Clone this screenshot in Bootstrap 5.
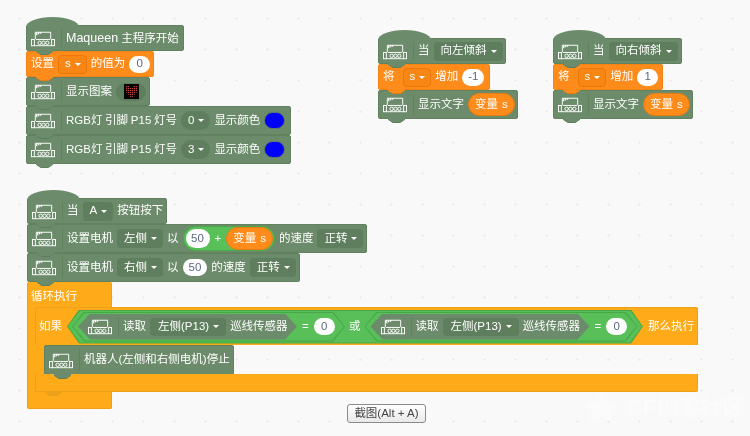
<!DOCTYPE html>
<html lang="en">
<head>
  <meta charset="UTF-8" />
  <title>Maqueen blocks</title>
  <link href="https://cdn.jsdelivr.net/npm/bootstrap@5.3.2/dist/css/bootstrap.min.css" rel="stylesheet"/>
  <style>
  body {
    margin: 0;
    background-color: #f9f9f9;
    font-family: "Liberation Sans", "Noto Sans CJK SC", sans-serif;
  }

  .workspace {
    width: 750px;
    height: 436px;
    overflow: hidden;
    background-color: #f9f9f9;
    background-image: radial-gradient(circle, #ececec 1px, transparent 1.2px);
    background-size: 31px 31px;
    background-position: 4px 3px;
    filter: blur(0.4px);
  }

  .stack-a { left: 26px; top: 25px; }
  .stack-b { left: 378px; top: 38px; }
  .stack-c { left: 553px; top: 38px; }
  .stack-d { left: 27px; top: 198px; }

  .blk {
    position: relative;
    display: flex;
    align-items: center;
    gap: 4px;
    height: 29px;
    color: #fff;
    font-size: 11.5px;
    white-space: nowrap;
    background: #6b8b6a;
    border: 1px solid #61815f;
    border-radius: 2px;
    padding-left: 4px;
  }
  .blk::before, .blk::after {
    content: "";
    position: absolute;
    left: 9px;
    width: 17px;
    clip-path: polygon(0 0, 100% 0, 100% 35%, 72% 100%, 28% 100%, 0 35%);
    z-index: 2;
  }
  .blk::before { bottom: -5px; height: 5px; background: #5f7e5e; }
  .blk::after { bottom: -4px; height: 4px; background: #6b8b6a; }

  .blk-set { background: #ff8c1a; border-color: #f28518; height: 26px; }
  .blk-set::before { background: #e67c12; }
  .blk-set::after { background: #ff8c1a; }

  .hat-dome {
    position: absolute;
    left: -1px;
    top: -9px;
    width: 53px;
    height: 10px;
    background: #6b8b6a;
    border-radius: 50% 50% 0 0 / 100% 100% 0 0;
  }
  .short { height: 26px; }

  .bot { width: 24px; height: 17px; flex: none; }
  .sep { width: 1px; align-self: stretch; margin: 3px 0 3px 2px; background: #61815f; }
  .word-big { font-size: 12.5px; }
  .tight-words { word-spacing: -0.5px; }

  .drop {
    display: flex;
    align-items: center;
    gap: 4px;
    height: 19px;
    padding: 0 6px 0 7px;
    background: #5f7e5e;
    border-radius: 4px;
  }
  .drop.round { border-radius: 10px; }
  .drop.orange { background: #f88614; border: 1px solid #e8780c; padding: 0 5px 0 6px; }
  .caret-mark {
    width: 0;
    height: 0;
    border-left: 3px solid transparent;
    border-right: 3px solid transparent;
    border-top: 3px solid #fff;
  }

  .num {
    display: flex;
    align-items: center;
    justify-content: center;
    height: 17px;
    min-width: 21px;
    padding: 0 6px;
    background: #fff;
    color: #5c6880;
    border-radius: 9px;
    font-size: 11.5px;
  }
  .swatch {
    width: 21px;
    height: 17px;
    background: #0000ff;
    border: 1px solid #5f7e5e;
    border-radius: 9px;
  }
  .matrix {
    display: flex;
    align-items: center;
    justify-content: center;
    width: 30px;
    height: 18px;
    background: #5f7e5e;
    border-radius: 9px;
  }
  .matrix svg { width: 15px; height: 15px; }

  .var-pill {
    display: flex;
    align-items: center;
    gap: 4px;
    height: 23px;
    padding: 0 6px;
    background: #ff8c1a;
    border: 1px solid #e67c12;
    border-radius: 12px;
  }
  .op-pill {
    display: flex;
    align-items: center;
    gap: 5px;
    height: 25px;
    padding: 0 1px 0 2px;
    background: #59c059;
    border: 1px solid #4aa84a;
    border-radius: 13px;
  }
  .op-pill .num { height: 19px; min-width: 24px; padding: 0 5px; border-radius: 10px; }

  .w-a1 { width: 158px; }
  .w-a2 { width: 128px; }
  .w-a3 { width: 124px; }
  .w-a4 { width: 265px; }
  .w-b1 { width: 128px; }
  .w-b2 { width: 112px; }
  .w-b3 { width: 140px; }
  .w-c1 { width: 129px; }
  .w-c2 { width: 110px; }
  .w-c3 { width: 140px; }
  .w-d1 { width: 140px; }
  .w-d2 { width: 340px; }
  .w-d3 { width: 273px; }

  /* forever loop: narrow orange column, the if block runs out past it */
  .loop-wrap {
    width: 85px;
    background: #ffab19;
    border: 1px solid #f09f14;
    border-top: 0;
    border-radius: 2px;
    color: #fff;
    font-size: 11.5px;
    white-space: nowrap;
    padding-bottom: 16px;
  }
  .loop-title { height: 25px; padding: 4px 0 0 3px; display: flex; align-items: center; }
  .if-wrap { margin-left: 7px; width: 663px; }
  .if-top {
    display: flex;
    align-items: center;
    gap: 5px;
    height: 38px;
    padding-left: 3px;
    background: #ffab19;
    border: 1px solid #eda11a;
    border-bottom: 0;
    border-radius: 2px 2px 0 0;
  }
  .if-mid { padding-left: 9px; height: 29px; }
  .if-mid .blk { width: 190px; height: 30px; }
  .if-foot {
    position: relative;
    height: 18px;
    background: #ffab19;
    border: 1px solid #eda11a;
    border-top: 0;
    border-radius: 0 0 2px 2px;
  }
  .if-foot::after {
    content: "";
    position: absolute;
    left: 9px;
    bottom: -5px;
    width: 17px;
    height: 5px;
    background: #eda11a;
    clip-path: polygon(0 0, 100% 0, 100% 35%, 72% 100%, 28% 100%, 0 35%);
  }

  .hex-edge {
    clip-path: polygon(12px 0, calc(100% - 12px) 0, 100% 50%, calc(100% - 12px) 100%, 12px 100%, 0 50%);
    background: #46a846;
    padding: 1px;
  }
  .hex-or, .hex-eq, .hex-read {
    display: flex;
    align-items: center;
    clip-path: polygon(12px 0, calc(100% - 12px) 0, 100% 50%, calc(100% - 12px) 100%, 12px 100%, 0 50%);
  }
  .hex-or { height: 32px; width: 574px; padding: 0 4px; gap: 4px; background: #59c059; }
  .hex-eq { height: 28px; width: 271px; gap: 5px; padding-left: 5px; background: #59c059; }
  .hex-read { height: 26px; width: 219px; gap: 4px; padding-left: 10px; background: #6b8b6a; }
  .hex-read .drop { height: 18px; padding: 0 7px 0 8px; }

  .shot-btn {
    left: 347px;
    top: 404px;
    width: 79px;
    height: 19px;
    padding: 0;
    font-size: 11.5px;
    line-height: 17px;
    color: #444;
    background: linear-gradient(#fff, #e9e9e9);
    border: 1px solid #8a8a8a;
    border-radius: 3px;
  }
  .water {
    left: 627px;
    top: 395px;
    font-size: 22px;
    line-height: 26px;
    font-weight: 700;
    color: #fbfbfb;
  }
  .water-mark { left: 584px; top: 392px; width: 34px; height: 30px; }
  </style>
</head>
<body>
  <svg width="0" height="0" class="position-absolute">
    <symbol id="bot" viewBox="0 0 25 17">
      <g fill="none" stroke="#fff" stroke-width="1">
        <path d="M4.5 9V2H20.5V9"/>
        <path d="M6 2V5M8 2V4M10 2V3.6" stroke-width="1.3"/>
        <rect x="0.5" y="9.5" width="3" height="6.5"/>
        <rect x="21.5" y="9.5" width="3" height="6.5"/>
        <path d="M3.5 16H21.5M5 9.5H20"/>
        <circle cx="9" cy="13" r="1.8"/>
        <circle cx="13" cy="13" r="1.8"/>
        <circle cx="17" cy="13" r="1.8"/>
      </g>
    </symbol>
    <pattern id="led" width="2" height="2" patternUnits="userSpaceOnUse">
      <rect width="1.2" height="1.2" fill="#c8433c"/>
    </pattern>
  </svg>

  <div class="workspace position-relative">

    <!-- main program -->
    <div class="stack-a position-absolute">
      <div class="blk short w-a1"><span class="hat-dome"></span><svg class="bot"><use href="#bot"/></svg><span class="sep"></span><span><span class="word-big">Maqueen</span> 主程序开始</span></div>
      <div class="blk blk-set w-a2"><span>设置</span><span class="drop orange"><span>s</span><i class="caret-mark"></i></span><span>的值为</span><span class="num">0</span></div>
      <div class="blk w-a3"><svg class="bot"><use href="#bot"/></svg><span class="sep"></span><span>显示图案</span>
        <span class="matrix">
          <svg viewBox="0 0 15 15">
            <rect width="15" height="15" fill="#000"/>
            <path d="M2 2H6V4H9V2H13V8L10 11L8 14H7L5 11L2 8Z" fill="url(#led)"/>
          </svg>
        </span>
      </div>
      <div class="blk w-a4"><svg class="bot"><use href="#bot"/></svg><span class="sep"></span><span class="tight-words">RGB灯 引脚 P15 灯号</span><span class="drop round"><span>0</span><i class="caret-mark"></i></span><span>显示颜色</span><span class="swatch"></span></div>
      <div class="blk w-a4"><svg class="bot"><use href="#bot"/></svg><span class="sep"></span><span class="tight-words">RGB灯 引脚 P15 灯号</span><span class="drop round"><span>3</span><i class="caret-mark"></i></span><span>显示颜色</span><span class="swatch"></span></div>
    </div>

    <!-- tilt left -->
    <div class="stack-b position-absolute">
      <div class="blk short w-b1"><span class="hat-dome"></span><svg class="bot"><use href="#bot"/></svg><span class="sep"></span><span>当</span><span class="drop"><span>向左倾斜</span><i class="caret-mark"></i></span></div>
      <div class="blk blk-set w-b2"><span class="me-1">将</span><span class="drop orange"><span>s</span><i class="caret-mark"></i></span><span>增加</span><span class="num">-1</span></div>
      <div class="blk w-b3"><svg class="bot"><use href="#bot"/></svg><span class="sep"></span><span>显示文字</span><span class="var-pill"><span>变量</span><span>s</span></span></div>
    </div>

    <!-- tilt right -->
    <div class="stack-c position-absolute">
      <div class="blk short w-c1"><span class="hat-dome"></span><svg class="bot"><use href="#bot"/></svg><span class="sep"></span><span>当</span><span class="drop"><span>向右倾斜</span><i class="caret-mark"></i></span></div>
      <div class="blk blk-set w-c2"><span class="me-1">将</span><span class="drop orange"><span>s</span><i class="caret-mark"></i></span><span>增加</span><span class="num">1</span></div>
      <div class="blk w-c3"><svg class="bot"><use href="#bot"/></svg><span class="sep"></span><span>显示文字</span><span class="var-pill"><span>变量</span><span>s</span></span></div>
    </div>

    <!-- button A -->
    <div class="stack-d position-absolute">
      <div class="blk short w-d1"><span class="hat-dome"></span><svg class="bot"><use href="#bot"/></svg><span class="sep"></span><span>当</span><span class="drop"><span>A</span><i class="caret-mark"></i></span><span>按钮按下</span></div>
      <div class="blk w-d2"><svg class="bot"><use href="#bot"/></svg><span class="sep"></span><span>设置电机</span><span class="drop"><span>左侧</span><i class="caret-mark"></i></span><span>以</span>
        <span class="op-pill"><span class="num">50</span><span>+</span><span class="var-pill"><span>变量</span><span>s</span></span></span>
        <span>的速度</span><span class="drop"><span>正转</span><i class="caret-mark"></i></span></div>
      <div class="blk w-d3"><svg class="bot"><use href="#bot"/></svg><span class="sep"></span><span>设置电机</span><span class="drop"><span>右侧</span><i class="caret-mark"></i></span><span>以</span><span class="num">50</span><span>的速度</span><span class="drop"><span>正转</span><i class="caret-mark"></i></span></div>

      <div class="loop-wrap">
        <div class="loop-title">循环执行</div>
        <div class="if-wrap">
          <div class="if-top">
            <span>如果</span>
            <div class="hex-edge">
              <div class="hex-or">
                <div class="hex-edge">
                  <div class="hex-eq">
                    <div class="hex-read"><svg class="bot"><use href="#bot"/></svg><span class="sep"></span><span>读取</span><span class="drop"><span>左侧(P13)</span><i class="caret-mark"></i></span><span>巡线传感器</span></div>
                    <span>=</span><span class="num">0</span>
                  </div>
                </div>
                <span>或</span>
                <div class="hex-edge">
                  <div class="hex-eq">
                    <div class="hex-read"><svg class="bot"><use href="#bot"/></svg><span class="sep"></span><span>读取</span><span class="drop"><span>左侧(P13)</span><i class="caret-mark"></i></span><span>巡线传感器</span></div>
                    <span>=</span><span class="num">0</span>
                  </div>
                </div>
              </div>
            </div>
            <span>那么执行</span>
          </div>
          <div class="if-mid">
            <div class="blk"><svg class="bot"><use href="#bot"/></svg><span class="sep"></span><span>机器人(左侧和右侧电机)停止</span></div>
          </div>
          <div class="if-foot"></div>
        </div>
      </div>
    </div>

    <button type="button" class="btn shot-btn position-absolute">截图(Alt + A)</button>
    <svg class="water-mark position-absolute" viewBox="0 0 34 30"><path d="M17 0L22 10L34 12L26 20L28 30L17 25L6 30L8 20L0 12L12 10Z" fill="#fbfbfb"/></svg>
    <div class="water position-absolute">DF创客社区</div>
  </div>

  <script src="https://cdn.jsdelivr.net/npm/bootstrap@5.3.2/dist/js/bootstrap.bundle.min.js"></script>
</body>
</html>
